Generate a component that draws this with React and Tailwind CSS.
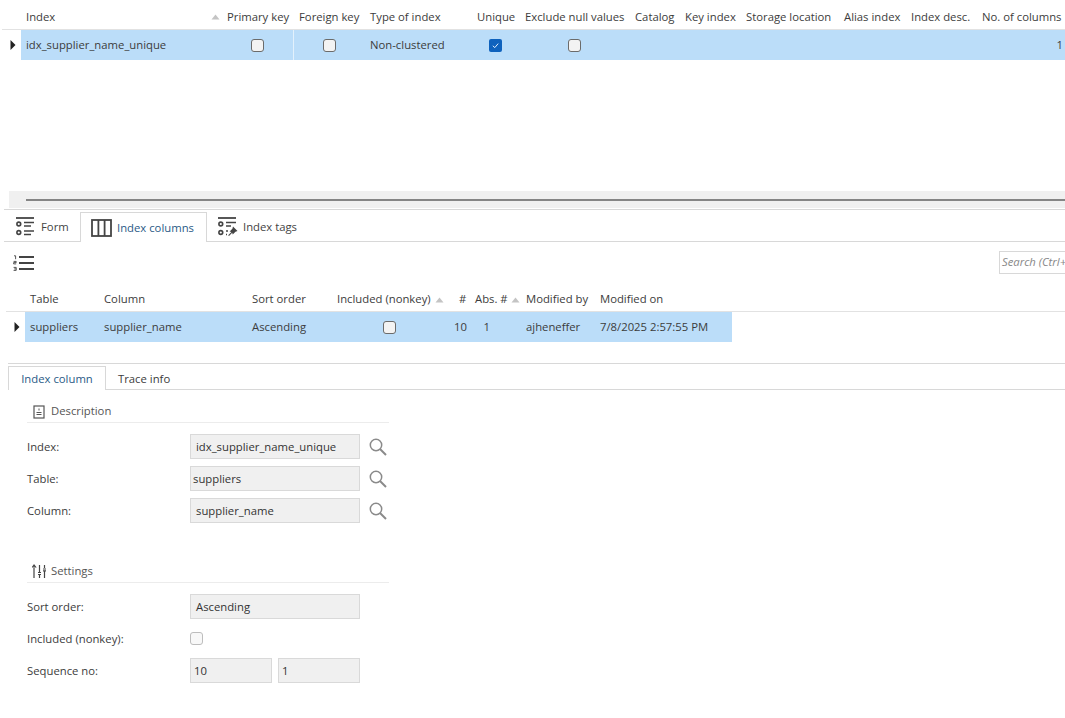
import React from 'react';

const font = { fontFamily: '"Open Sans", "Noto Sans", sans-serif' };

const SortArrow = () => (
  <svg width="9" height="6" viewBox="0 0 9 6" className="shrink-0"><path d="M0.5 5.5 L4.5 0.5 L8.5 5.5 Z" fill="#c4c4c4" /></svg>
);

const RowMarker = () => (
  <svg width="6" height="10" viewBox="0 0 6 10"><path d="M0.5 0 L5.5 5 L0.5 10 Z" fill="#222" /></svg>
);

const Check = ({ checked, className = 'border-[#6b6b6b] bg-[#f3f3f3]' }) =>
  checked ? (
    <span className="flex h-[13px] w-[13px] items-center justify-center rounded-[2px] bg-[#0f62bd]">
      <svg width="9" height="9" viewBox="0 0 9 9"><path d="M1.8 4.8 L3.8 6.6 L7.2 2.6" fill="none" stroke="#dfeeff" strokeWidth="1" /></svg>
    </span>
  ) : (
    <span className={`block h-[13px] w-[13px] rounded-[3px] border ${className}`} />
  );

const FormIcon = () => (
  <svg width="18" height="19" viewBox="0 0 18 19" fill="none" stroke="#444" className="shrink-0">
    <path d="M0 1h18" strokeWidth="1.8" />
    <circle cx="2.8" cy="7" r="1.9" strokeWidth="1.6" />
    <circle cx="2.8" cy="15.5" r="1.9" strokeWidth="1.6" />
    <path d="M8 5.5h10M8 9h7M8 14h10M8 17.5h7" strokeWidth="1.6" />
  </svg>
);

const ColumnsIcon = () => (
  <svg width="21" height="18" viewBox="0 0 21 18" fill="none" stroke="#444" strokeWidth="1.8" className="shrink-0">
    <rect x="1" y="1" width="19" height="16" />
    <path d="M7.4 1v16M13.6 1v16" />
  </svg>
);

const TagsIcon = () => (
  <svg width="20" height="20" viewBox="0 0 20 20" fill="none" stroke="#444" className="shrink-0">
    <path d="M0 1h18" strokeWidth="1.8" />
    <circle cx="2.8" cy="7" r="1.9" strokeWidth="1.6" />
    <circle cx="2.8" cy="15.5" r="1.9" strokeWidth="1.6" />
    <path d="M8 5.5h10M8 9h5M8 14h2M8 17.5h1" strokeWidth="1.6" />
    <path d="M15 9.5l4.5 4.5-2 .8-2.8 2.8-.5-1.8-3.2 3.2-.8-.8 3.2-3.2-1.8-.5 2.8-2.8z" fill="#444" stroke="none" />
  </svg>
);

const NumberedListIcon = () => (
  <svg width="21" height="16" viewBox="0 0 21 16" fill="none" stroke="#444" className="shrink-0">
    <path d="M6 2h15M6 8h15M6 14h15" strokeWidth="1.8" />
    <path d="M1 .8h1.6v3.4M.6 6.4h2.6v1.2H.6v1.3h2.6M.6 12.4h2.6v3H.6M1.2 13.9h2" strokeWidth="0.9" />
  </svg>
);

const DescriptionIcon = () => (
  <svg width="12" height="14" viewBox="0 0 12 14" fill="none" stroke="#555">
    <rect x="1" y="1" width="10" height="12" strokeWidth="1.2" />
    <path d="M6 3.5v2M3.5 7.5h5M3.5 9.5h5" strokeWidth="1" />
  </svg>
);

const SettingsIcon = () => (
  <svg width="15" height="15" viewBox="0 0 15 15" fill="none" stroke="#444" strokeWidth="1.2">
    <path d="M2 4v10M2 1L0.5 3h3zM7.5 1v7M7.5 11v3M12.5 1v3M12.5 7v7" />
    <path d="M6 8.5h3M6 10.5h3M11 5h3M11 6.8h3" />
  </svg>
);

const LookupIcon = () => (
  <svg width="18" height="18" viewBox="0 0 18 18" fill="none" stroke="#8a8a8a" className="ml-[9px] shrink-0">
    <circle cx="7" cy="7" r="5.7" strokeWidth="1.5" />
    <path d="M11 11l6 6" strokeWidth="2" />
  </svg>
);

const topColumns = [
  { label: 'Primary key', w: 'w-[72px]' },
  { label: 'Foreign key', w: 'w-[71px]' },
  { label: 'Type of index', w: 'w-[107px]' },
  { label: 'Unique', w: 'w-[48px]' },
  { label: 'Exclude null values', w: 'w-[110px]' },
  { label: 'Catalog', w: 'w-[50px]' },
  { label: 'Key index', w: 'w-[61px]' },
  { label: 'Storage location', w: 'w-[98px]' },
  { label: 'Alias index', w: 'w-[67px]' },
  { label: 'Index desc.', w: 'w-[71px]' },
];

const Tab = ({ icon, label, gap = 'gap-[5px]', active, className = '' }) => (
  <div
    className={`flex items-center ${gap} ${className} ${
      active ? 'z-10 -mb-px mt-[2px] border border-b-0 border-[#d8d8d8] bg-white text-[#2a5a86]' : 'pt-[2px] text-[#444]'
    }`}
  >
    {icon}
    <span className="pt-[2px]">{label}</span>
  </div>
);

const FieldRow = ({ label, children }) => (
  <div className="flex h-[25px] items-center">
    <span className="w-[163px] shrink-0 pt-[2px]">{label}</span>
    {children}
  </div>
);

const Field = ({ value, className = 'w-[170px] pl-[5px]' }) => (
  <div className={`flex h-[25px] shrink-0 items-center border border-[#d9d9d9] bg-[#f0f0f0] pt-[2px] text-[#333] ${className}`}>{value}</div>
);

const SectionTitle = ({ icon, label }) => (
  <div className="flex h-[22px] items-center border-b border-[#ececec] text-[#555]">
    <span className="flex w-[24px] justify-center">{icon}</span>
    <span>{label}</span>
  </div>
);

export default function App() {
  return (
    <div className="h-[718px] w-[1065px] overflow-hidden bg-white text-[11.3px] text-[#3c3c3c]" style={font}>
      {/* indexes grid */}
      <div className="ml-[2px] flex h-[30px] items-center border-b border-[#e2e2e2] pt-[5px] whitespace-nowrap">
        <div className="flex w-[220px] shrink-0 items-center justify-between pl-[24px] pr-[2px]">
          <span>Index</span>
          <SortArrow />
        </div>
        {topColumns.map((c) => (
          <div key={c.label} className={`shrink-0 pl-[5px] ${c.w}`}>{c.label}</div>
        ))}
        <div className="shrink-0 pl-[5px]">No. of columns</div>
      </div>
      <div className="flex h-[30px] items-center whitespace-nowrap">
        <div className="flex w-[21px] shrink-0 justify-center pl-[5px]"><RowMarker /></div>
        <div className="flex h-full flex-1 items-center bg-[#bbddf9]">
          <div className="w-[201px] shrink-0 pl-[5px]">idx_supplier_name_unique</div>
          <div className="flex h-full w-[72px] shrink-0 items-center justify-center border-r border-[#e3f1fc]"><Check /></div>
          <div className="flex w-[71px] shrink-0 justify-center"><Check /></div>
          <div className="w-[106px] shrink-0 pl-[5px]">Non-clustered</div>
          <div className="flex w-[48px] shrink-0 justify-center"><Check checked /></div>
          <div className="flex w-[110px] shrink-0 justify-center"><Check /></div>
          <div className="flex-1 pr-[2px] text-right">1</div>
        </div>
      </div>

      {/* horizontal scrollbar */}
      <div className="ml-[9px] mt-[131px] flex h-[17px] items-center bg-[#f0f0f0] pl-[17px]">
        <div className="h-[2px] w-full bg-[#858585]" />
      </div>

      {/* main tabs */}
      <div className="ml-[4px] mt-px flex h-[33px] border-t border-b border-[#d8d8d8] pl-[12px]">
        <Tab icon={<FormIcon />} label="Form" gap="gap-[7px]" className="w-[64px]" />
        <Tab icon={<ColumnsIcon />} label="Index columns" active className="w-[127px] pl-[10px]" />
        <Tab icon={<TagsIcon />} label="Index tags" className="pl-[11px]" />
      </div>

      {/* toolbar */}
      <div className="flex h-[36px] items-center justify-between pl-[13px] pt-[5px]">
        <NumberedListIcon />
        <div className="-mr-[66px] flex h-[23px] w-[132px] items-center border border-[#d8d8d8] pl-[2px] italic text-[#888]">Search (Ctrl+F)</div>
      </div>

      {/* index columns grid */}
      <div className="ml-[6px] flex h-[34px] items-center whitespace-nowrap border-b border-[#e2e2e2] pt-[10px]">
        <div className="w-[98px] shrink-0 pl-[24px]">Table</div>
        <div className="w-[148px] shrink-0">Column</div>
        <div className="w-[85px] shrink-0">Sort order</div>
        <div className="flex w-[122px] shrink-0 items-center gap-[4px]">Included (nonkey)<SortArrow /></div>
        <div className="w-[16px] shrink-0">#</div>
        <div className="flex w-[51px] shrink-0 items-center gap-[3px]">Abs. #<SortArrow /></div>
        <div className="w-[74px] shrink-0">Modified by</div>
        <div>Modified on</div>
      </div>
      <div className="flex h-[30px] items-center whitespace-nowrap">
        <div className="flex w-[25px] shrink-0 justify-center pl-[9px]"><RowMarker /></div>
        <div className="flex h-full w-[707px] items-center bg-[#bbddf9]">
          <div className="w-[79px] shrink-0 pl-[5px]">suppliers</div>
          <div className="w-[148px] shrink-0">supplier_name</div>
          <div className="w-[85px] shrink-0">Ascending</div>
          <div className="flex w-[105px] shrink-0 justify-center"><Check /></div>
          <div className="w-[25px] shrink-0 text-right">10</div>
          <div className="w-[23px] shrink-0 text-right">1</div>
          <div className="w-[110px] shrink-0 pl-[36px]">ajheneffer</div>
          <div>7/8/2025 2:57:55 PM</div>
        </div>
      </div>

      {/* detail tabs */}
      <div className="ml-[8px] mt-[21px] flex h-[27px] border-t border-b border-[#d8d8d8]">
        <div className="z-10 -mb-px mt-[2px] flex w-[98px] items-center justify-center border border-b-0 border-[#d8d8d8] bg-white pt-[2px] text-[#2a5a86]">Index column</div>
        <div className="flex items-center pl-[12px] pt-[5px]">Trace info</div>
      </div>

      {/* detail form */}
      <div className="ml-[27px] mt-[11px] w-[362px]">
        <SectionTitle icon={<DescriptionIcon />} label="Description" />
        <div className="mt-[11px] flex flex-col gap-[7px]">
          <FieldRow label="Index:"><Field value="idx_supplier_name_unique" /><LookupIcon /></FieldRow>
          <FieldRow label="Table:"><Field value="suppliers" className="w-[170px] pl-[2px]" /><LookupIcon /></FieldRow>
          <FieldRow label="Column:"><Field value="supplier_name" /><LookupIcon /></FieldRow>
        </div>

        <div className="mt-[38px]">
          <SectionTitle icon={<SettingsIcon />} label="Settings" />
        </div>
        <div className="mt-[11px] flex flex-col gap-[7px]">
          <FieldRow label="Sort order:"><Field value="Ascending" /></FieldRow>
          <FieldRow label="Included (nonkey):"><Check className="border-[#bdbdbd] bg-[#f8f8f8]" /></FieldRow>
          <FieldRow label="Sequence no:">
            <Field value="10" className="w-[82px] pl-[3px]" />
            <Field value="1" className="ml-[6px] w-[82px] pl-[3px]" />
          </FieldRow>
        </div>
      </div>
    </div>
  );
}
